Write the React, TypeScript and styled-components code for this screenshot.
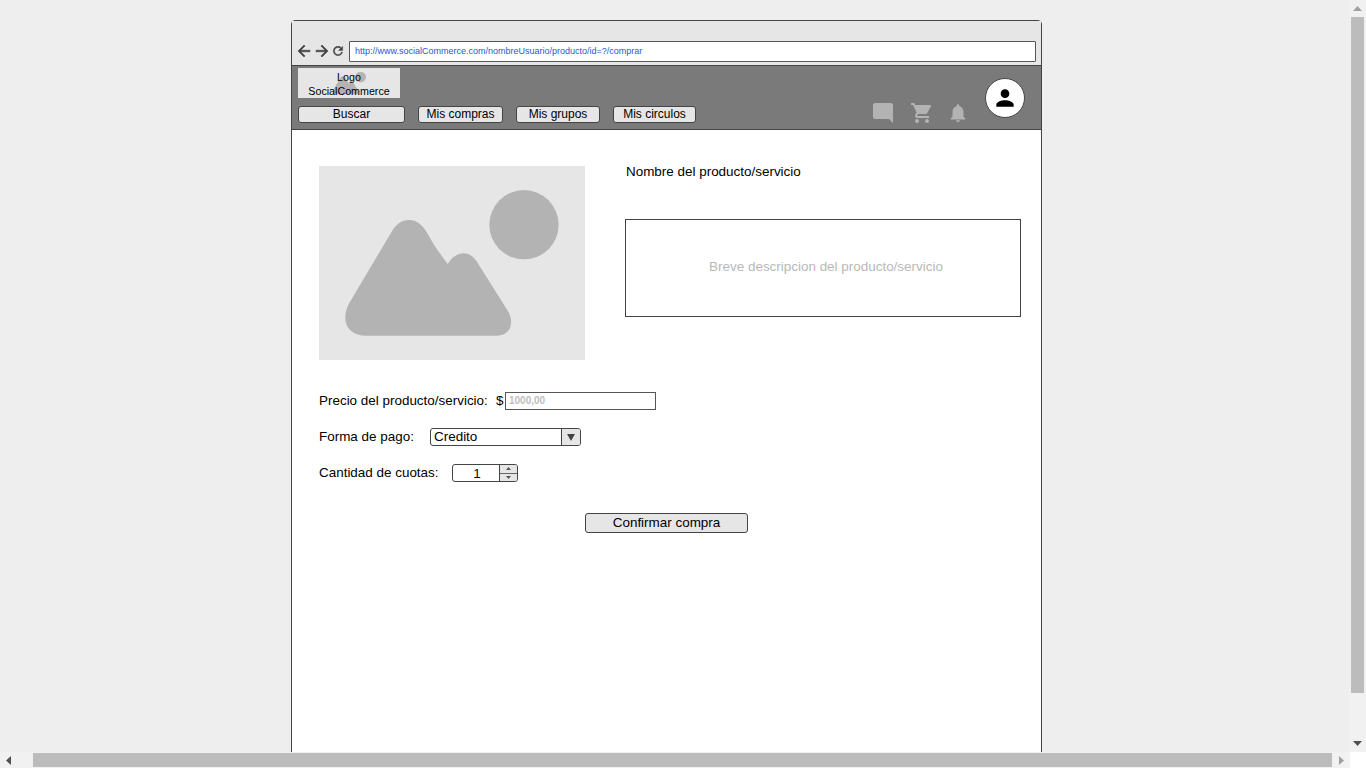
import React from "react";
import styled, { createGlobalStyle } from "styled-components";

const Global = createGlobalStyle`
  html, body { margin: 0; padding: 0; height: 100%; overflow: hidden; }
  body { font-family: "Liberation Sans", Arial, sans-serif; color: #000; }
`;

const Screen = styled.div`
  width: 1366px; height: 768px; display: grid;
  grid-template-columns: 1350px 16px; grid-template-rows: 752px 16px;
  background: #eeeeee; overflow: hidden;
`;
const Stage = styled.div`overflow: hidden; padding: 20px 0 0 291px;`;
const Win = styled.div`
  width: 749px; height: 760px; border: 1px solid #444; border-radius: 4px 4px 0 0;
  background: #fff; display: flex; flex-direction: column;
`;
const Chrome = styled.div`
  height: 44px; box-sizing: border-box; background: #e6e6e6; padding: 20px 5px 3px 3px;
  display: flex; align-items: center;
`;
const NavIcon = styled.svg<{ $w: number; $mr: number }>`
  width: ${p => p.$w}px; height: ${p => p.$w}px; margin: 0 ${p => p.$mr}px 2px 0; fill: #444; stroke: #444; stroke-width: 0.8; flex: none;
`;
const Url = styled.div`
  flex: 1; height: 21px; box-sizing: border-box; border: 1px solid #555; background: #fff;
  font-size: 9px; line-height: 19px; color: #2a55d8; padding-left: 5px; border-radius: 1px;
`;
const Header = styled.div`
  height: 65px; box-sizing: border-box; background: #7a7a7a; border-top: 1px solid #444;
  border-bottom: 1px solid #444; display: flex; justify-content: space-between; padding: 2px 16px 0 6px;
`;
const HeaderLeft = styled.div`display: flex; flex-direction: column; align-items: flex-start;`;
const Logo = styled.div`
  position: relative; width: 102px; height: 30px; background: #e6e6e6; font-size: 10.7px;
  line-height: 14px; text-align: center; padding-top: 2px; box-sizing: border-box; margin-bottom: 8px;
`;
const LogoArt = styled.svg`position: absolute; left: 31px; top: 0; width: 41px; height: 30px;`;
const LogoText = styled.span`position: relative;`;
const Nav = styled.div`display: flex; gap: 13px;`;
const NavBtn = styled.div<{ $w: number }>`
  width: ${p => p.$w}px; height: 17px; box-sizing: border-box; background: #e6e6e6; border: 1px solid #444;
  border-radius: 3px; font-size: 12px; line-height: 15px; text-align: center;
`;
const HeaderRight = styled.div`display: flex; align-items: flex-start;`;
const Icons = styled.div`display: flex; align-items: center; margin: 33px 16px 0 0;`;
const HeadIcon = styled.svg<{ $s: number; $mr: number }>`
  width: ${p => p.$s}px; height: ${p => p.$s}px; margin-right: ${p => p.$mr}px; fill: #b3b3b3; display: block;
`;
const Avatar = styled.div`
  width: 40px; height: 40px; box-sizing: border-box; border-radius: 50%; background: #fff; border: 1px solid #444;
  margin-top: 10px; display: flex; align-items: center; justify-content: center;
`;
const AvatarIcon = styled.svg`width: 26px; height: 26px; fill: #000; display: block;`;
const Content = styled.div`flex: 1; padding: 36px 20px 0 27px;`;
const Top = styled.div`display: flex; gap: 40px;`;
const Placeholder = styled.svg`width: 266px; height: 194px; display: block; flex: none;`;
const Info = styled.div`flex: 1; display: flex; flex-direction: column;`;
const Name = styled.div`font-size: 13.45px; line-height: 16px; padding-left: 1px; margin: -2px 0 39px;`;
const Desc = styled.div`
  height: 98px; box-sizing: border-box; border: 1px solid #444; color: #b8b8b8; font-size: 13.45px;
  display: flex; align-items: center; justify-content: center; padding: 0 0 4px 6px;
`;
const Form = styled.div`margin-top: 32px; display: flex; flex-direction: column;`;
const Row = styled.div<{ $mb: number }>`display: flex; align-items: center; height: 18px; margin-bottom: ${p => p.$mb}px;`;
const Label = styled.div<{ $w: number }>`width: ${p => p.$w}px; font-size: 13.45px; flex: none; margin-bottom: 2px;`;
const PriceInput = styled.div`
  width: 151px; height: 18px; box-sizing: border-box; border: 1px solid #555; color: #bdbdbd;
  font-size: 10px; font-weight: bold; line-height: 16px; padding-left: 3px;
`;
const Select = styled.div`
  width: 151px; height: 18px; box-sizing: border-box; border: 1px solid #444; border-radius: 3px; display: flex;
  font-size: 13.45px; line-height: 16px; padding-left: 3px; justify-content: space-between; overflow: hidden;
`;
const SelectBtn = styled.div`
  width: 18px; background: #e6e6e6; border-left: 1px solid #444; display: flex; align-items: center; justify-content: center;
`;
const Tri = styled.svg`width: 8px; height: 7px; fill: #444; display: block;`;
const Spin = styled.div`
  width: 66px; height: 18px; box-sizing: border-box; border: 1px solid #444; border-radius: 3px; display: flex; overflow: hidden;
`;
const SpinValue = styled.div`flex: 1; font-size: 13.45px; line-height: 17px; text-align: center; padding-left: 2px;`;
const SpinBtns = styled.div`width: 17px; border-left: 1px solid #444; display: flex; flex-direction: column; background: #e6e6e6;`;
const SpinBtn = styled.div<{ $top?: boolean }>`
  flex: 1; display: flex; align-items: center; justify-content: center; ${p => p.$top ? "border-bottom: 1px solid #666;" : ""}
`;
const SmallTri = styled.svg`width: 5px; height: 3px; fill: #555; display: block;`;
const Confirm = styled.div`
  width: 163px; height: 20px; box-sizing: border-box; background: #e6e6e6; border: 1px solid #444; border-radius: 3px;
  font-size: 13.45px; line-height: 17px; text-align: center; margin: 13px 0 0 266px;
`;
const VBar = styled.div`background: #f1f1f1; display: flex; flex-direction: column; align-items: center; padding-right: 1px; box-sizing: border-box;`;
const VThumb = styled.div`width: 13px; height: 676px; background: #bcbcbc; margin: 6px 0 auto;`;
const HBar = styled.div`background: #f1f1f1; display: flex; align-items: center; padding: 0 6px;`;
const HThumb = styled.div`width: 1299px; height: 14px; background: #bcbcbc; margin: 0 auto 0 22px;`;
const Corner = styled.div`background: #fff;`;
const ArrowV = styled.svg<{ $c: string; $m: string }>`width: 9px; height: 5px; fill: ${p => p.$c}; margin: ${p => p.$m}; display: block; flex: none;`;
const ArrowH = styled.svg<{ $c: string }>`width: 5px; height: 9px; fill: ${p => p.$c}; display: block; flex: none;`;

const mountain = "M170 527C125 527 100 500 107 460C109 445 115 433 125 417L245 215C258 193 275 180 297 180C322 180 340 197 355 225C375 262 393 285 413 312C425 291 442 280 462 280C480 280 494 293 505 312L595 455C614 490 600 527 560 527Z";
const Art = () => (
  <>
    <rect x="27" y="18" width="798" height="582" fill="#e6e6e6" />
    <path d={mountain} fill="#b3b3b3" />
    <circle cx="642" cy="194" r="104" fill="#b3b3b3" />
  </>
);

export default function App() {
  return (
    <>
      <Global />
      <Screen>
        <Stage>
          <Win>
            <Chrome>
              <NavIcon $w={18} $mr={0} viewBox="0 0 24 24"><path d="M20 11H7.83l5.59-5.59L12 4l-8 8 8 8 1.41-1.41L7.83 13H20v-2z" /></NavIcon>
              <NavIcon $w={18} $mr={0} viewBox="0 0 24 24"><path d="M12 4l-1.41 1.41L16.17 11H4v2h12.17l-5.58 5.59L12 20l8-8z" /></NavIcon>
              <NavIcon $w={14} $mr={4} viewBox="0 0 24 24"><path d="M17.65 6.35C16.2 4.9 14.21 4 12 4c-4.42 0-7.99 3.58-7.99 8s3.57 8 7.99 8c3.73 0 6.84-2.55 7.73-6h-2.08c-.82 2.33-3.04 4-5.65 4-3.31 0-6-2.69-6-6s2.69-6 6-6c1.66 0 3.14.69 4.22 1.78L13 11h7V4l-2.35 2.35z" /></NavIcon>
              <Url>http://www.socialCommerce.com/nombreUsuario/producto/id=?/comprar</Url>
            </Chrome>
            <Header>
              <HeaderLeft>
                <Logo>
                  <LogoArt viewBox="27 18 798 582" preserveAspectRatio="none">
                    <path d={mountain} fill="#b3b3b3" />
                    <circle cx="642" cy="194" r="104" fill="#b3b3b3" />
                  </LogoArt>
                  <LogoText>Logo<br />SocialCommerce</LogoText>
                </Logo>
                <Nav>
                  <NavBtn $w={107}>Buscar</NavBtn>
                  <NavBtn $w={85}>Mis compras</NavBtn>
                  <NavBtn $w={84}>Mis grupos</NavBtn>
                  <NavBtn $w={83}>Mis circulos</NavBtn>
                </Nav>
              </HeaderLeft>
              <HeaderRight>
                <Icons>
                  <HeadIcon $s={24} $mr={15} viewBox="0 0 24 24"><path d="M4 2h16c1.1 0 2 .9 2 2v18l-4-4H4c-1.1 0-2-.9-2-2V4c0-1.1.9-2 2-2z" /></HeadIcon>
                  <HeadIcon $s={24} $mr={13} viewBox="0 0 24 24"><path d="M7 18c-1.1 0-1.99.9-1.99 2S5.9 22 7 22s2-.9 2-2-.9-2-2-2zM1 2v2h2l3.6 7.59-1.35 2.45c-.16.28-.25.61-.25.96 0 1.1.9 2 2 2h12v-2H7.42c-.14 0-.25-.11-.25-.25l.03-.12.9-1.63h7.45c.75 0 1.41-.41 1.75-1.03l3.58-6.49c.08-.14.12-.31.12-.48 0-.55-.45-1-1-1H5.21l-.94-2H1zm16 16c-1.1 0-1.99.9-1.99 2s.89 2 1.99 2 2-.9 2-2-.9-2-2-2z" /></HeadIcon>
                  <HeadIcon $s={22} $mr={0} viewBox="0 0 24 24"><path d="M12 22c1.1 0 2-.9 2-2h-4c0 1.1.89 2 2 2zm6-6v-5c0-3.07-1.64-5.64-4.5-6.32V4c0-.83-.67-1.5-1.5-1.5s-1.5.67-1.5 1.5v.68C7.63 5.36 6 7.92 6 11v5l-2 2v1h16v-1l-2-2z" /></HeadIcon>
                </Icons>
                <Avatar>
                  <AvatarIcon viewBox="0 0 24 24"><path d="M12 12c2.21 0 4-1.79 4-4s-1.79-4-4-4-4 1.79-4 4 1.79 4 4 4zm0 2c-2.67 0-8 1.34-8 4v2h16v-2c0-2.66-5.33-4-8-4z" /></AvatarIcon>
                </Avatar>
              </HeaderRight>
            </Header>
            <Content>
              <Top>
                <Placeholder viewBox="27 18 798 582"><Art /></Placeholder>
                <Info>
                  <Name>Nombre del producto/servicio</Name>
                  <Desc>Breve descripcion del producto/servicio</Desc>
                </Info>
              </Top>
              <Form>
                <Row $mb={18}>
                  <Label $w={177}>Precio del producto/servicio:</Label>
                  <Label $w={9}>$</Label>
                  <PriceInput>1000,00</PriceInput>
                </Row>
                <Row $mb={18}>
                  <Label $w={111}>Forma de pago:</Label>
                  <Select>
                    Credito
                    <SelectBtn><Tri viewBox="0 0 9 8"><path d="M0 0h9L4.5 8z" /></Tri></SelectBtn>
                  </Select>
                </Row>
                <Row $mb={18}>
                  <Label $w={133}>Cantidad de cuotas:</Label>
                  <Spin>
                    <SpinValue>1</SpinValue>
                    <SpinBtns>
                      <SpinBtn $top><SmallTri viewBox="0 0 5 3"><path d="M0 3h5L2.5 0z" /></SmallTri></SpinBtn>
                      <SpinBtn><SmallTri viewBox="0 0 5 3"><path d="M0 0h5L2.5 3z" /></SmallTri></SpinBtn>
                    </SpinBtns>
                  </Spin>
                </Row>
                <Confirm>Confirmar compra</Confirm>
              </Form>
            </Content>
          </Win>
        </Stage>
        <VBar>
          <ArrowV $c="#a0a0a0" $m="6px 0 0" viewBox="0 0 9 5"><path d="M0 5h9L4.5 0z" /></ArrowV>
          <VThumb />
          <ArrowV $c="#505050" $m="0 0 6px" viewBox="0 0 9 5"><path d="M0 0h9L4.5 5z" /></ArrowV>
        </VBar>
        <HBar>
          <ArrowH $c="#505050" viewBox="0 0 5 9"><path d="M5 0v9L0 4.5z" /></ArrowH>
          <HThumb />
          <ArrowH $c="#a0a0a0" viewBox="0 0 5 9"><path d="M0 0v9l5-4.5z" /></ArrowH>
        </HBar>
        <Corner />
      </Screen>
    </>
  );
}
